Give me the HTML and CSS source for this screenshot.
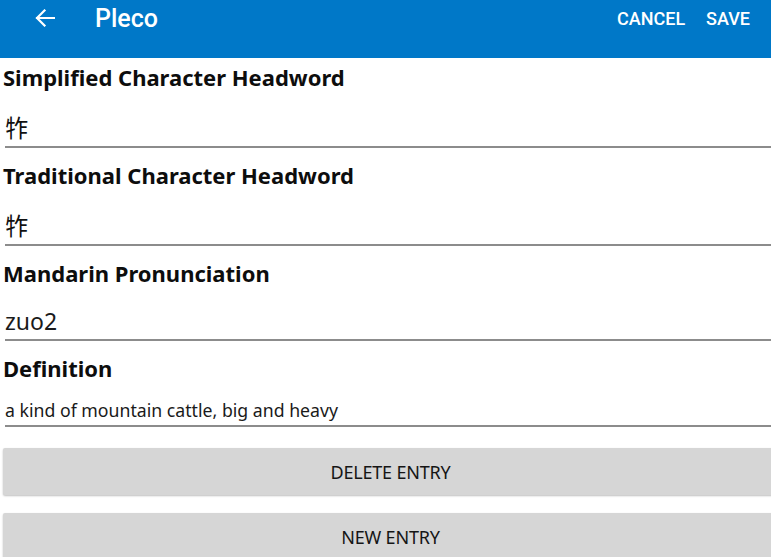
FILE: index.html
```html
<!DOCTYPE html>
<html lang="en">
<head>
  <meta charset="UTF-8" />
  <meta name="viewport" content="width=device-width, initial-scale=1.0" />
  <title>Pleco</title>
  <link rel="stylesheet" href="styles.css">
</head>
<body>
  <header class="appbar">
    <div class="appbar-left">
      <svg class="back" width="20" height="18" viewBox="0 0 20 18">
        <path d="M19 9H2M9.5 1.5L2 9l7.5 7.5" fill="none" stroke="#fff" stroke-width="2.2" stroke-linecap="square"/>
      </svg>
      <span class="title">Pleco</span>
    </div>
    <div class="actions">
      <span>CANCEL</span>
      <span>SAVE</span>
    </div>
  </header>

  <main class="form">
    <div class="field">
      <div class="label">Simplified Character Headword</div>
      <div class="value cjk">&#x3E32;</div>
    </div>
    <div class="field">
      <div class="label">Traditional Character Headword</div>
      <div class="value cjk">&#x3E32;</div>
    </div>
    <div class="field">
      <div class="label">Mandarin Pronunciation</div>
      <div class="value">zuo2</div>
    </div>
    <div class="field">
      <div class="label">Definition</div>
      <div class="value small">a kind of mountain cattle, big and heavy</div>
    </div>

    <div class="buttons">
      <div class="btn">DELETE ENTRY</div>
      <div class="btn">NEW ENTRY</div>
    </div>
  </main>
</body>
</html>
```
FILE: styles.css
```css
* {
  box-sizing: border-box;
  margin: 0;
  padding: 0;
}

body {
  font-family: "Noto Sans", "Noto Sans CJK SC", sans-serif;
  background: #fff;
  color: #111;
  width: 780px;
  overflow: hidden;
}

.appbar {
  height: 58px;
  background-color: #0078c8;
  color: #fff;
  display: flex;
  justify-content: space-between;
  align-items: flex-start;
  font-family: Roboto, sans-serif;
  font-weight: 500;
}

.appbar-left {
  height: 36px;
  display: flex;
  align-items: center;
  padding-left: 35px;
}

.back {
  display: block;
}

.title {
  font-size: 25px;
  margin-left: 40px;
}

.actions {
  height: 36px;
  display: flex;
  align-items: center;
  gap: 21px;
  padding-right: 30px;
  font-size: 18px;
}

.form {
  padding-left: 3px;
}

.field {
  margin-bottom: 8px;
}

.label {
  font-size: 22px;
  font-weight: bold;
  line-height: 38px;
  padding-bottom: 2px;
  color: #0d0d0d;
}

.value {
  margin-left: 2px;
  border-bottom: 2px solid #8c8c8c;
  font-size: 23px;
  line-height: 30px;
  padding-top: 12px;
  padding-bottom: 3px;
  color: #1a1a1a;
}

.value.cjk {
  font-family: "Noto Sans CJK SC", sans-serif;
  font-size: 24px;
  padding-top: 14px;
  padding-bottom: 4px;
  color: #111;
}

.value.small {
  font-size: 17.7px;
  line-height: 26px;
  padding-top: 8px;
  padding-bottom: 2px;
}

.buttons {
  margin-top: 21px;
  display: flex;
  flex-direction: column;
  gap: 18px;
}

.btn {
  height: 47px;
  background-color: #d6d6d6;
  border-radius: 2px;
  box-shadow: 0 1px 2px rgba(0, 0, 0, 0.25);
  display: flex;
  align-items: center;
  justify-content: center;
  font-size: 18px;
  letter-spacing: -0.2px;
  color: #151515;
  padding-right: 2px;
}
```
